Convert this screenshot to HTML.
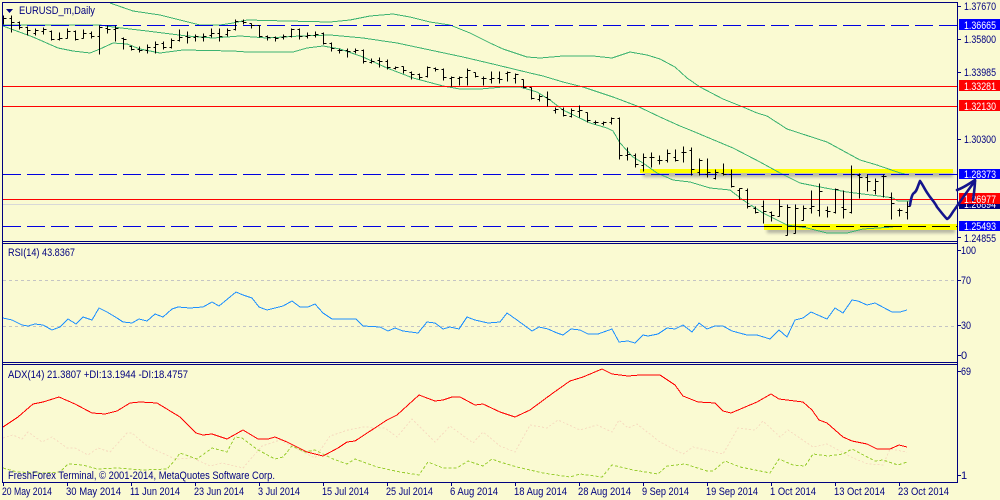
<!DOCTYPE html>
<html><head><meta charset="utf-8"><style>
html,body{margin:0;padding:0;background:#fafad2;width:1000px;height:500px;overflow:hidden}
svg{display:block}
text{font-family:"Liberation Sans",sans-serif;font-size:11px;fill:#000080}
.w{fill:#fff}
.l{fill:none;shape-rendering:crispEdges}
</style></head><body>
<svg width="1000" height="500" viewBox="0 0 1000 500">
<defs><filter id="b" x="-5%" y="-100%" width="110%" height="300%"><feGaussianBlur stdDeviation="1.5"/></filter></defs>
<rect width="1000" height="500" fill="#fafad2"/>

<rect x="643" y="172" width="310" height="5" fill="#777" opacity=".55" filter="url(#b)"/>
<rect x="767" y="228" width="188" height="5" fill="#777" opacity=".55" filter="url(#b)"/>
<rect x="640" y="169" width="313" height="4" fill="#ffff00"/>
<rect x="764" y="224" width="193" height="6" fill="#ffff00"/>

<!-- bands -->
<g class="l" stroke="#3cb371">
<polyline points="110,3 133,11 160,15 180,20 200,25 220,25 233,23 247,20 287,21 330,22 350,20 370,16 393,14 410,17 430,22 450,25 470,33 490,43 503,49 527,57 540,58 563,56 593,56 612,58 630,52 647,55 660,59 675,67 687,78 700,87 723,99 743,107 757,113 767,116 787,129 827,142 860,160 877,165 900,173 905,174"/>
<polyline points="3,25 100,25 113,27 147,31 187,36 213,38 240,36 267,38 300,36 330,35 363,38 397,43 430,50 463,57 497,65 530,73 543,76 563,82 583,87 613,97 637,106 660,117 680,126 690,130 733,148 760,162 780,173 800,183 820,187 847,192 887,197 893,198 898,201 910,201"/>
<polyline points="3,26 33,37 58,48 73,51 90,53 100,49 113,43 127,44 140,49 160,53 183,50 233,51 247,52 293,52 307,48 323,46 340,49 363,57 387,68 413,78 443,86 460,89 480,89 503,87 520,87 537,92 550,100 563,110 590,123 607,128 613,131 620,143 633,157 643,163 657,173 673,180 690,182 710,188 730,190 743,200 763,213 787,225 807,228 827,233 847,233 863,229 893,227"/>
</g>

<!-- horizontal levels -->
<g class="l">
<path d="M3 25.5H957M3 174.5H957M3 226.5H764" stroke="#0000e0" stroke-dasharray="18 6"/>
<path d="M764 226.5H957" stroke="#000" stroke-dasharray="18 6"/>
<path d="M3 86.5H957M3 106.5H957M3 199.5H957" stroke="#ff0000"/>
<path d="M3 204.5H957" stroke="#d8d8d8"/>
</g>

<!-- OHLC bars -->
<path class="l" stroke="#000" transform="translate(.5 .5)" d="M3 15V24M3 18h3
M11 15V32M9 18h2M11 22h3
M19 21V29M17 22h2M19 27h3
M27 26V35M25 27h2M27 30h3
M35 28V35M33 33h2M35 30h3
M43 27V34M41 31h2M43 29h3
M51 30V40M49 31h2M51 39h3
M59 32V40M57 39h2M59 38h3
M67 28V38M65 38h2M67 31h3
M75 30V40M73 31h2M75 39h3
M83 29V38M81 38h2M83 33h3
M91 31V38M89 33h2M91 36h3
M99 25V54M97 36h2M99 27h3
M107 25V33M105 28h2M107 29h3
M115 25V41M113 29h2M115 28h3
M123 37V49M121 38h2M123 39h3
M131 45V50M129 46h2M131 49h3
M139 46V52M137 49h2M139 50h3
M147 44V53M145 50h2M147 47h3
M155 41V53M153 47h2M155 44h3
M163 41V49M161 43h2M163 47h3
M171 38V48M169 47h2M171 40h3
M179 29V41M177 40h2M179 37h3
M187 31V43M185 36h2M187 37h3
M195 34V41M193 37h2M195 36h3
M203 33V41M201 37h2M203 36h3
M211 28V37M209 35h2M211 33h3
M219 28V41M217 33h2M219 36h3
M227 28V36M225 34h2M227 30h3
M235 19V30M233 29h2M235 21h3
M243 19V24M241 21h2M243 22h3
M251 23V28M249 23h2M251 25h3
M259 25V37M257 25h2M259 36h3
M267 35V40M265 36h2M267 37h3
M275 36V41M273 37h2M275 38h3
M283 34V39M281 37h2M283 36h3
M291 28V37M289 36h2M291 29h3
M299 28V39M297 29h2M299 36h3
M307 32V38M305 36h2M307 35h3
M315 31V37M313 35h2M315 34h3
M323 32V44M321 33h2M323 43h3
M331 42V51M329 43h2M331 48h3
M339 48V53M337 50h2M339 50h3
M347 48V57M345 50h2M347 51h3
M355 48V53M353 51h2M355 50h3
M363 49V63M361 50h2M363 61h3
M371 58V63M369 62h2M371 61h3
M379 57V67M377 60h2M379 61h3
M387 59V69M385 61h2M387 67h3
M395 66V69M393 68h2M395 67h3
M403 66V73M401 66h2M403 70h3
M411 71V79M409 72h2M411 74h3
M419 73V79M417 74h2M419 77h3
M427 66V77M425 76h2M427 67h3
M435 67V71M433 68h2M435 69h3
M443 68V80M441 69h2M443 77h3
M451 76V86M449 78h2M451 77h3
M459 76V85M457 78h2M459 77h3
M467 68V85M465 77h2M467 70h3
M475 72V77M473 72h2M475 76h3
M483 76V85M481 78h2M483 78h3
M491 71V83M489 79h2M491 78h3
M499 71V83M497 78h2M499 79h3
M507 71V81M505 73h2M507 72h3
M515 73V83M513 78h2M515 74h3
M523 79V88M521 79h2M523 87h3
M531 87V99M529 87h2M531 98h3
M539 94V101M537 99h2M539 96h3
M547 91V106M545 97h2M547 99h3
M555 107V113M553 110h2M555 109h3
M563 107V116M561 109h2M563 115h3
M571 108V117M569 116h2M571 110h3
M579 105V117M577 111h2M579 110h3
M587 112V122M585 112h2M587 120h3
M595 120V124M593 122h2M595 122h3
M603 121V125M601 123h2M603 122h3
M611 117V124M609 122h2M611 118h3
M619 117V159M617 118h2M619 155h3
M627 147V160M625 155h2M627 154h3
M635 153V167M633 155h2M635 164h3
M643 153V171M641 165h2M643 157h3
M651 152V167M649 157h2M651 157h3
M659 155V164M657 160h2M659 160h3
M667 149V162M665 160h2M667 153h3
M675 149V161M673 157h2M675 160h3
M683 146V162M681 152h2M683 152h3
M691 147V175M689 150h2M691 169h3
M699 158V175M697 172h2M699 160h3
M707 158V177M705 174h2M707 172h3
M715 169V179M713 178h2M715 172h3
M723 163V175M721 173h2M723 174h3
M731 169V187M729 174h2M731 186h3
M739 188V199M737 190h2M739 188h3
M747 188V208M745 190h2M747 206h3
M755 206V213M753 208h2M755 212h3
M763 200V223M761 206h2M763 211h3
M771 211V221M769 212h2M771 215h3
M779 199V216M777 216h2M779 206h3
M787 204V235M785 235h2M787 207h3
M795 204V233M793 233h2M795 208h3
M803 205V220M801 220h2M803 208h3
M811 190V213M809 208h2M811 206h3
M819 183V216M817 210h2M819 191h3
M827 206V217M825 210h2M827 211h3
M835 188V213M833 212h2M835 189h3
M843 190V218M841 207h2M843 209h3
M851 165V213M849 212h2M851 174h3
M859 173V198M857 175h2M859 177h3
M867 174V191M865 177h2M867 181h3
M875 178V194M873 190h2M875 181h3
M883 174V197M881 176h2M883 176h3
M891 192V219M889 197h2M891 203h3
M899 208V216M897 210h2M899 210h3
M907 201V219M905 212h2M907 206h3"/>

<!-- RSI -->
<path class="l" d="M3 280.5H957M3 326.5H957" stroke="#c4c4c4" stroke-dasharray="3 3"/>
<polyline class="l" stroke="#1e90ff" points="3,318 12,320 22,325 28,326 35,324 43,325 52,330 60,327 68,319 76,324 83,317 92,320 99,308 107,312 117,318 123,322 132,323 139,319 147,321 155,314 163,317 172,309 178,307 190,308 203,307 212,302 219,306 236,292 243,295 252,298 259,307 267,310 283,306 292,301 300,307 308,307 315,304 323,313 332,319 356,319 363,326 380,327 388,331 395,328 403,331 418,333 427,322 435,323 443,329 450,327 459,329 467,317 475,320 488,323 500,322 507,313 517,320 532,331 539,327 548,329 557,333 563,335 571,329 580,330 588,334 598,334 612,329 619,342 628,341 635,343 643,335 648,336 658,334 667,328 675,329 683,325 692,332 699,323 707,329 715,326 723,326 732,331 747,335 757,335 770,339 779,330 787,337 795,320 803,318 811,312 827,319 835,308 843,313 852,300 858,301 867,305 875,303 892,312 900,312 907,310"/>

<!-- ADX -->
<polyline class="l" stroke="#f7dcc0" stroke-dasharray="2 2" points="3,438 13,435 22,439 28,432 42,442 52,437 67,448 75,448 88,455 98,448 110,452 127,433 132,433 147,446 160,452 175,459 193,458 210,466 222,463 243,468 262,446 280,440 293,447 315,458 330,436 348,430 363,427 385,428 397,437 412,419 435,442 450,426 473,443 483,432 500,446 515,452 530,425 547,428 558,420 580,430 597,425 612,432 619,420 628,428 637,424 660,442 683,454 693,447 723,454 738,428 755,430 763,421 780,437 788,430 813,447 827,444 853,458 868,464 883,465 890,449 907,452"/>
<polyline class="l" stroke="#9acd32" stroke-dasharray="3 2" points="3,468 17,472 43,473 60,472 68,464 83,465 97,469 117,468 143,470 167,469 175,460 180,453 197,459 212,448 227,452 235,437 242,438 258,450 275,459 283,457 292,446 305,452 315,450 333,459 347,464 355,459 377,467 400,472 419,475 428,462 443,468 457,468 468,461 483,466 492,459 500,462 517,467 543,473 570,477 580,474 602,477 612,465 633,470 658,474 667,466 685,464 707,471 713,471 725,461 740,467 770,473 779,459 793,465 805,466 813,454 828,456 843,454 852,449 875,461 883,460 898,465 907,462"/>
<polyline class="l" stroke="#ff0000" points="3,427 18,417 33,404 43,402 59,397 75,404 92,413 105,414 117,411 130,403 140,402 157,403 180,417 196,433 203,435 212,434 227,439 243,430 258,439 268,439 275,437 287,442 307,452 323,456 338,448 347,442 355,441 387,420 397,415 419,395 435,401 443,400 452,397 460,397 475,405 483,404 500,412 515,417 530,410 553,393 570,381 583,377 602,369 612,374 628,376 640,375 660,375 675,385 683,396 698,402 715,403 723,411 731,413 757,402 771,394 779,399 803,402 812,410 819,420 827,423 843,437 852,441 867,444 877,449 890,449 899,445 907,447"/>

<!-- frames -->
<g class="l" stroke="#000080">
<path d="M2.5 2.5H957.5V482.5H2.5ZM2 241.5H957M2 243.5H957M2 362.5H957M2 364.5H957"/>
<path d="M958 6.5h3M958 39.5h3M958 72.5h3M958 139.5h3M958 237.5h3M958 250.5h3M958 280.5h3M958 325.5h3M958 355.5h3M958 371.5h3M958 475.5h3"/>
<path d="M3.5 483v3M67.5 483v3M131.5 483v3M195.5 483v3M259.5 483v3M323.5 483v3M387.5 483v3M451.5 483v3M515.5 483v3M579.5 483v3M643.5 483v3M707.5 483v3M771.5 483v3M835.5 483v3M899.5 483v3"/>
</g>
<path d="M6 9h7l-3.5 4z" fill="#000080"/>

<!-- headers -->
<text x="19" y="14" textLength="76" lengthAdjust="spacingAndGlyphs">EURUSD_m,Daily</text>
<text x="8" y="256" textLength="67" lengthAdjust="spacingAndGlyphs">RSI(14) 43.8367</text>
<text x="8" y="378" textLength="180" lengthAdjust="spacingAndGlyphs">ADX(14) 21.3807 +DI:13.1944 -DI:18.4757</text>
<text x="8" y="479" textLength="267" lengthAdjust="spacingAndGlyphs">FreshForex Terminal, © 2001-2014, MetaQuotes Software Corp.</text>

<!-- price axis -->
<text x="964" y="10" textLength="32" lengthAdjust="spacingAndGlyphs">1.37670</text>
<text x="964" y="43" textLength="32" lengthAdjust="spacingAndGlyphs">1.35800</text>
<text x="964" y="76" textLength="32" lengthAdjust="spacingAndGlyphs">1.33985</text>
<text x="964" y="143" textLength="32" lengthAdjust="spacingAndGlyphs">1.30300</text>
<text x="964" y="242" textLength="32" lengthAdjust="spacingAndGlyphs">1.24855</text>
<text x="961" y="254" textLength="15" lengthAdjust="spacingAndGlyphs">100</text>
<text x="961" y="284" textLength="10" lengthAdjust="spacingAndGlyphs">70</text>
<text x="961" y="329" textLength="10" lengthAdjust="spacingAndGlyphs">30</text>
<text x="961" y="359">0</text>
<text x="961" y="375" textLength="10" lengthAdjust="spacingAndGlyphs">69</text>
<text x="961" y="479">1</text>

<rect x="959" y="19" width="41" height="11" fill="#0000ff"/>
<text class="w" x="964" y="29" textLength="32" lengthAdjust="spacingAndGlyphs">1.36665</text>
<rect x="959" y="80" width="41" height="11" fill="#ff0000"/>
<text class="w" x="964" y="90" textLength="32" lengthAdjust="spacingAndGlyphs">1.33281</text>
<rect x="959" y="100" width="41" height="11" fill="#ff0000"/>
<text class="w" x="964" y="110" textLength="32" lengthAdjust="spacingAndGlyphs">1.32130</text>
<rect x="959" y="169" width="41" height="10" fill="#0000ff"/>
<text class="w" x="964" y="178" textLength="32" lengthAdjust="spacingAndGlyphs">1.28373</text>
<rect x="959" y="199" width="41" height="10" fill="#000080"/>
<text class="w" x="964" y="208" textLength="32" lengthAdjust="spacingAndGlyphs">1.26894</text>
<rect x="959" y="193" width="41" height="11" fill="#ff0000"/>
<text class="w" x="964" y="203" textLength="32" lengthAdjust="spacingAndGlyphs">1.26977</text>
<rect x="959" y="221" width="41" height="10" fill="#0000ff"/>
<text class="w" x="964" y="230" textLength="32" lengthAdjust="spacingAndGlyphs">1.25493</text>

<!-- date axis -->
<text x="2" y="495" textLength="50" lengthAdjust="spacingAndGlyphs">20 May 2014</text>
<text x="66" y="495" textLength="55" lengthAdjust="spacingAndGlyphs">30 May 2014</text>
<text x="130" y="495" textLength="50" lengthAdjust="spacingAndGlyphs">11 Jun 2014</text>
<text x="194" y="495" textLength="50" lengthAdjust="spacingAndGlyphs">23 Jun 2014</text>
<text x="258" y="495" textLength="42" lengthAdjust="spacingAndGlyphs">3 Jul 2014</text>
<text x="322" y="495" textLength="47" lengthAdjust="spacingAndGlyphs">15 Jul 2014</text>
<text x="386" y="495" textLength="47" lengthAdjust="spacingAndGlyphs">25 Jul 2014</text>
<text x="450" y="495" textLength="48" lengthAdjust="spacingAndGlyphs">6 Aug 2014</text>
<text x="514" y="495" textLength="53" lengthAdjust="spacingAndGlyphs">18 Aug 2014</text>
<text x="578" y="495" textLength="53" lengthAdjust="spacingAndGlyphs">28 Aug 2014</text>
<text x="642" y="495" textLength="47" lengthAdjust="spacingAndGlyphs">9 Sep 2014</text>
<text x="706" y="495" textLength="52" lengthAdjust="spacingAndGlyphs">19 Sep 2014</text>
<text x="770" y="495" textLength="46" lengthAdjust="spacingAndGlyphs">1 Oct 2014</text>
<text x="834" y="495" textLength="51" lengthAdjust="spacingAndGlyphs">13 Oct 2014</text>
<text x="898" y="495" textLength="51" lengthAdjust="spacingAndGlyphs">23 Oct 2014</text>

<!-- hand-drawn arrow -->
<g fill="none" stroke="#14148c" stroke-width="2.6" stroke-linecap="round" stroke-linejoin="round">
<path d="M910 205C911 199 912 194 914 193C917 191 917 188 920 181C923 185 925 190 928 194C931 199 934 201 937 207C941 212 944 216 947 219C950 218 951 214 955 209C962 199 968 190 975 181"/>
<path d="M957 190C963 188 969 184 975 180C975 187 974 193 973 200"/>
</g>
</svg>
</body></html>
